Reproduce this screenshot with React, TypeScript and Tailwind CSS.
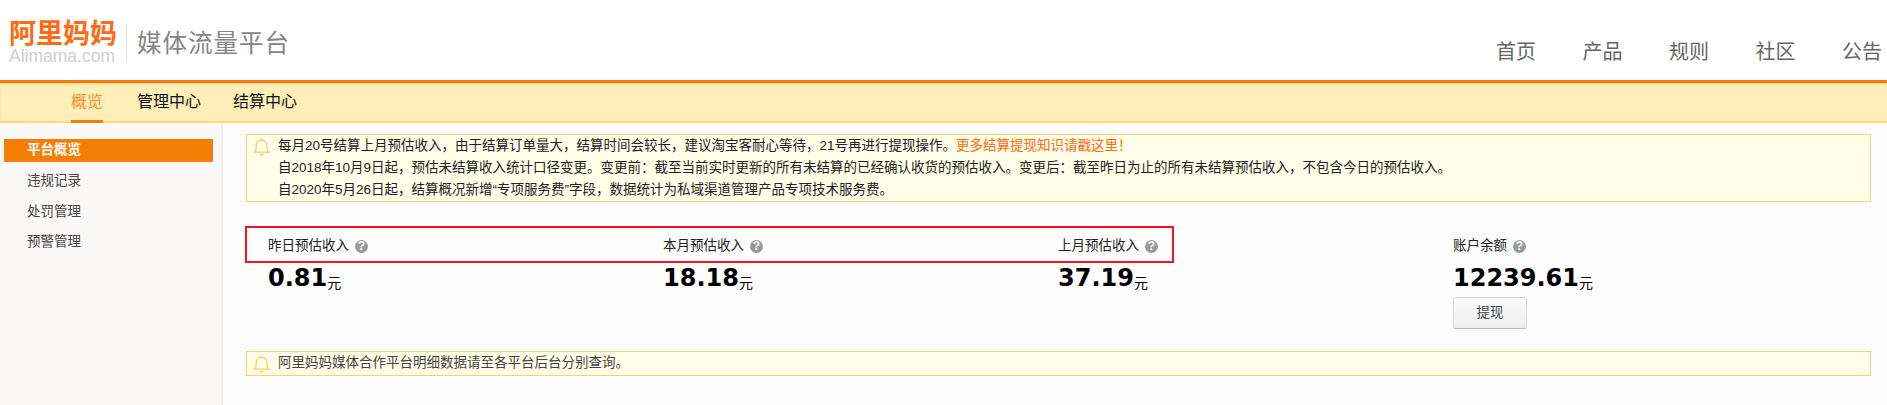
import React from "react";

const cjk = "font-['Arial','Liberation_Sans','Noto_Sans_CJK_SC',sans-serif]";

function BellIcon() {
  return (
    <svg width="17" height="18" viewBox="0 0 17 18" fill="none" stroke="#fcc865" strokeWidth="1.3" className="shrink-0">
      <path d="M1 14.2c1.6-1.2 2.2-2.5 2.2-4.6V7.6C3.2 4.4 5.4 2.2 8.5 2.2s5.3 2.2 5.3 5.4v2c0 2.1.6 3.4 2.2 4.6H1z" />
      <path d="M8.5 0.6v1.6" />
      <path d="M6.5 16.6h4" strokeWidth="1.6" />
    </svg>
  );
}

function Help() {
  return (
    <span className="inline-flex h-[13px] w-[13px] items-center justify-center rounded-full bg-[#999999] text-[12px] leading-none font-bold text-white">
      ?
    </span>
  );
}

function Stat({ label, value, children }: { label: string; value: string; children?: React.ReactNode }) {
  return (
    <div className="w-[395px] shrink-0">
      <div className="flex h-[20px] items-center gap-[6px] text-[13.5px] leading-[20px] text-[#222]">
        <span>{label}</span>
        <Help />
      </div>
      <div className="mt-[7px] flex h-[30px] items-end leading-[30px] text-black">
        <span className="font-['DejaVu_Sans'] text-[24px] font-bold">{value}</span>
        <span className="mb-[-1px] text-[14px] leading-[22px]">元</span>
      </div>
      {children}
    </div>
  );
}

export default function App() {
  const nav = ["首页", "产品", "规则", "社区", "公告"];
  return (
    <div className={`relative h-[405px] w-[1887px] overflow-hidden bg-white ${cjk}`}>
      <header className="flex h-[80px] items-start justify-between">
        <div className="flex items-start pt-[22px] pl-[9px]">
          <div className="flex w-[107px] flex-col">
            <span className="h-[24px] text-[27px] leading-[24px] font-bold whitespace-nowrap text-[#ff6a13]">阿里妈妈</span>
            <span className="mt-[4px] h-[12px] text-[17.5px] leading-[12px] font-['Liberation_Sans'] whitespace-nowrap text-[#cfcfcf]">Alimama.com</span>
          </div>
          <div className="mx-[10px] mt-[2px] h-[37px] w-px bg-[#e3e3e3]" />
          <span className="mt-[6px] text-[24.5px] leading-[32px] tracking-[1px] text-[#858585]">媒体流量平台</span>
        </div>
        <nav className="mt-[39px] mr-[5px] flex gap-[46.5px] text-[20px] leading-[26px] text-[#666666]">
          {nav.map((n) => (
            <span key={n} className="w-[40px] whitespace-nowrap">{n}</span>
          ))}
        </nav>
      </header>
      <div className="h-[3px] bg-[#f57f06]" />
      <div className="flex h-[40px] items-stretch border-b-2 border-[#ffdc6e] bg-[#feeeb8] pl-[71px] text-[16px] shadow-[inset_0_2px_2px_rgba(0,0,0,0.06)]">
        <span className="mr-[34px] mb-[-2px] flex items-center border-b-[3px] border-[#f57f06] text-[#f78a36]">概览</span>
        <span className="mr-[32px] flex items-center text-[#111]">管理中心</span>
        <span className="flex items-center text-[#111]">结算中心</span>
      </div>
      <div className="flex h-[282px]">
        <aside className="w-[223px] shrink-0 border-r-2 border-[#efefef] bg-[#faf9f7] pt-[16px] pl-[4px] text-[13.5px] text-[#444]">
          <div className="flex h-[23px] w-[209px] items-center bg-[#f57f06] pl-[23px] font-bold text-white">平台概览</div>
          <div className="mt-[4px] flex h-[31px] items-center pl-[23px]">违规记录</div>
          <div className="flex h-[30px] items-center pl-[23px]">处罚管理</div>
          <div className="flex h-[31px] items-center pl-[23px]">预警管理</div>
        </aside>
        <main className="relative flex-1 bg-[#fdfdfd] pt-[11px] pr-[16px] pl-[23px]">
          <div className="flex h-[68px] gap-[7px] border border-[#fcd071] bg-[#fffee8] pl-[6px] text-[13.5px] leading-[22px] text-[#222]">
            <div className="mt-[3px]"><BellIcon /></div>
            <div className="pl-[1px]">
              <div>
                每月20号结算上月预估收入，由于结算订单量大，结算时间会较长，建议淘宝客耐心等待，21号再进行提现操作。
                <span className="text-[#ff6a13]">更多结算提现知识请戳这里！</span>
              </div>
              <div>自2018年10月9日起，预估未结算收入统计口径变更。变更前：截至当前实时更新的所有未结算的已经确认收货的预估收入。变更后：截至昨日为止的所有未结算预估收入，不包含今日的预估收入。</div>
              <div>自2020年5月26日起，结算概况新增“专项服务费”字段，数据统计为私域渠道管理产品专项技术服务费。</div>
            </div>
          </div>
          <div className="mt-[34px] flex pl-[22px]">
            <Stat label="昨日预估收入" value="0.81" />
            <Stat label="本月预估收入" value="18.18" />
            <Stat label="上月预估收入" value="37.19" />
            <Stat label="账户余额" value="12239.61">
              <button className="mt-[4px] h-[32px] w-[74px] rounded-[2px] border border-[#d8d8d8] border-b-[#bbb] bg-gradient-to-b from-[#fbfbfb] to-[#eeeeee] text-[13.5px] text-[#444]">提现</button>
            </Stat>
          </div>
          <div className="mt-[22px] flex h-[25px] items-center gap-[7px] border border-[#fcd071] bg-[#fffee8] pl-[6px] text-[13.5px] text-[#444]">
            <BellIcon />
            <span className="pl-[1px]">阿里妈妈媒体合作平台明细数据请至各平台后台分别查询。</span>
          </div>
          <div className="absolute top-[103px] left-[22px] h-[37px] w-[929px] border-2 border-[#f5141e]" />
        </main>
      </div>
    </div>
  );
}
